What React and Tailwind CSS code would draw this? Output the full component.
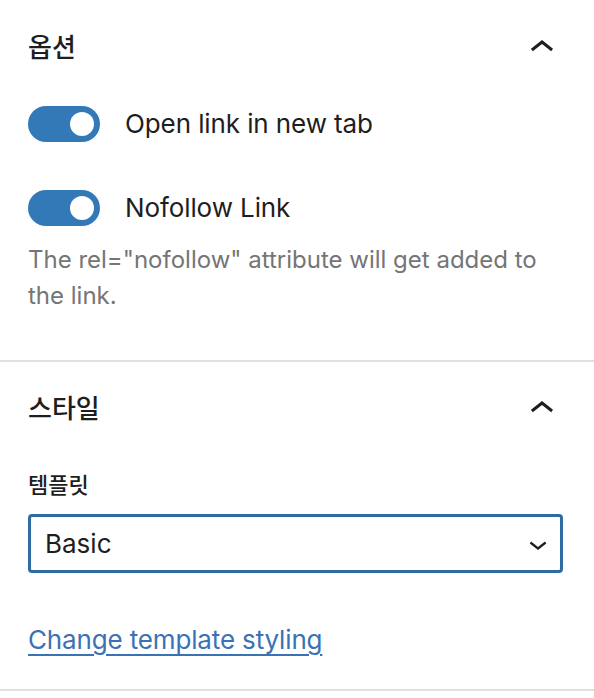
import React, { useState } from "react";

const font = { fontFamily: "Inter, 'Noto Sans CJK KR', sans-serif" };

const ChevronUp = () => (
  <svg viewBox="0 0 24 24" width="48" height="48" className="-my-[6px] fill-[#1e1e1e]">
    <path d="M6.5 12.4L12 8l5.5 4.4-.9 1.2L12 10l-4.6 3.6-1-1.2z" />
  </svg>
);

const ChevronDown = () => (
  <svg viewBox="0 0 24 24" width="36" height="36" className="fill-[#1e1e1e]">
    <path d="M17.5 11.6L12 16l-5.5-4.4.9-1.2L12 14l4.6-3.6 1 1.2z" />
  </svg>
);

const Toggle = ({ on, onClick }) => (
  <button
    onClick={onClick}
    className={`relative h-[36px] w-[72px] shrink-0 rounded-full ${
      on ? "bg-[#3479b7]" : "bg-[#949494]"
    }`}
  >
    <span
      className={`absolute top-[6px] h-[24px] w-[24px] rounded-full bg-white ${
        on ? "left-[42px]" : "left-[6px]"
      }`}
    />
  </button>
);

const PanelTitle = ({ children }) => (
  <div className="flex h-[36px] items-center justify-between">
    <h2 className="text-[26px] font-medium leading-[36px] text-[#1e1e1e]">{children}</h2>
    <span className="-mr-[2px] flex items-center">
      <ChevronUp />
    </span>
  </div>
);

export default function App() {
  const [newTab, setNewTab] = useState(true);
  const [nofollow, setNofollow] = useState(true);

  return (
    <div className="min-h-[698px] w-[594px] bg-white" style={font}>
      {/* 옵션 */}
      <section className="border-b-2 border-[#e0e0e0] pl-[28px] pr-[30px] pt-[30px] pb-[46px]">
        <PanelTitle>옵션</PanelTitle>
        <div className="mt-[40px] flex h-[36px] items-center gap-[25px]">
          <Toggle on={newTab} onClick={() => setNewTab(!newTab)} />
          <span className="text-[26px] leading-[36px] tracking-[-0.1px] text-[#1e1e1e]">
            Open link in new tab
          </span>
        </div>
        <div className="mt-[48px] flex h-[36px] items-center gap-[25px]">
          <Toggle on={nofollow} onClick={() => setNofollow(!nofollow)} />
          <span className="text-[26px] leading-[36px] tracking-[-0.1px] text-[#1e1e1e]">
            Nofollow Link
          </span>
        </div>
        <p className="mt-[16px] text-[24px] leading-[36px] text-[#757575]">
          The rel="nofollow" attribute will get added to the link.
        </p>
      </section>

      {/* 스타일 */}
      <section className="border-b-2 border-[#e0e0e0] pl-[28px] pr-[30px] pt-[29px] pb-[31px]">
        <PanelTitle>스타일</PanelTitle>
        <label className="mt-[42px] block text-[22px] font-medium leading-[32px] text-[#1e1e1e]">
          템플릿
        </label>
        <div className="mt-[13px] flex h-[59px] w-[535px] items-center justify-between rounded-[4px] border-[3px] border-[#2e6da4] pl-[14px] pr-[4px]">
          <span className="text-[26px] text-[#1e1e1e]">Basic</span>
          <ChevronDown />
        </div>
        <a
          href="#"
          className="mt-[49px] block text-[26px] leading-[36px] tracking-[-0.15px] text-[#3a72b3] underline underline-offset-[5px]"
        >
          Change template styling
        </a>
      </section>
    </div>
  );
}
